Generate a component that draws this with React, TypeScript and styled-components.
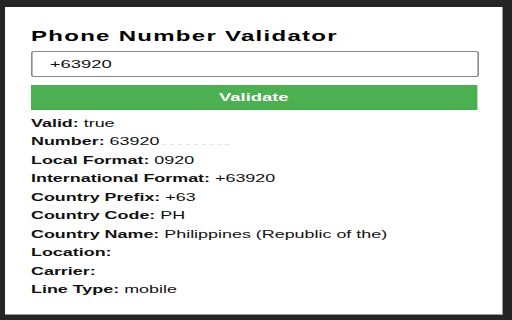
import React from 'react';
import styled, { createGlobalStyle } from 'styled-components';

const STRETCH = 1.6;

const GlobalStyle = createGlobalStyle`
  html, body {
    margin: 0;
    padding: 0;
    background: #262626;
    font-family: 'Liberation Sans', Arial, sans-serif;
  }
`;

const Screen = styled.div`
  width: 512px;
  height: 320px;
  box-sizing: border-box;
  padding: 7px 0 0 5px;
  background: #252525;
  overflow: hidden;
`;

const Popup = styled.div`
  width: 498px;
  height: 308px;
  box-sizing: border-box;
  padding: 19.5px 0 0 26px;
  background: #ffffff;
  border-right: 1px solid #9a9a9a;
  border-bottom: 1px solid #9a9a9a;
  overflow: hidden;
`;

// the screenshot is wider than it is tall, so the whole form is stretched sideways
const Stretch = styled.div`
  width: 280px;
  transform: scaleX(${STRETCH});
  transform-origin: 0 0;
`;

const Title = styled.h1`
  margin: 0;
  font-size: 15px;
  line-height: 17px;
  letter-spacing: 0.8px;
  font-weight: bold;
  color: #000;
`;

const PhoneInput = styled.input`
  display: block;
  box-sizing: border-box;
  width: 280px;
  height: 26px;
  margin: 7.5px 0 0;
  padding: 0 0 0 10.7px;
  border: 1px solid #8a8a8a;
  border-radius: 2px;
  font-family: inherit;
  font-size: 11.5px;
  color: #111;
  background: #fff;
  outline: none;
`;

const ValidateButton = styled.button`
  display: block;
  width: 278.5px;
  height: 24.5px;
  margin-top: 8px;
  padding: 0;
  border: 0;
  background: #4caf50;
  color: #fff;
  font-family: inherit;
  font-size: 11.5px;
  font-weight: bold;
  cursor: pointer;
`;

const Results = styled.div`
  margin-top: 4px;
`;

const Row = styled.div`
  font-size: 11.2px;
  line-height: 18.5px;
  color: #111;
  white-space: nowrap;
`;

const Key = styled.b`
  font-weight: bold;
`;

const Redacted = styled.span`
  display: inline-block;
  width: 42px;
  height: 9px;
  margin-left: 2px;
  vertical-align: baseline;
  border-bottom: 1px dashed #e6e6e6;
`;

const App = () => {
  const [phone, setPhone] = React.useState('+63920');

  return (
    <>
      <GlobalStyle />
      <Screen>
        <Popup>
          <Stretch>
            <Title>Phone Number Validator</Title>
            <PhoneInput
              type='text'
              value={phone}
              onChange={(e) => setPhone(e.target.value)}
            />
            <ValidateButton>Validate</ValidateButton>
            <Results>
              <Row>
                <Key>Valid:</Key> true
              </Row>
              <Row>
                <Key>Number:</Key> 63920
                <Redacted />
              </Row>
              <Row>
                <Key>Local Format:</Key> 0920
              </Row>
              <Row>
                <Key>International Format:</Key> +63920
              </Row>
              <Row>
                <Key>Country Prefix:</Key> +63
              </Row>
              <Row>
                <Key>Country Code:</Key> PH
              </Row>
              <Row>
                <Key>Country Name:</Key> Philippines (Republic of the)
              </Row>
              <Row>
                <Key>Location:</Key>
              </Row>
              <Row>
                <Key>Carrier:</Key>
              </Row>
              <Row>
                <Key>Line Type:</Key> mobile
              </Row>
            </Results>
          </Stretch>
        </Popup>
      </Screen>
    </>
  );
};

export default App;
